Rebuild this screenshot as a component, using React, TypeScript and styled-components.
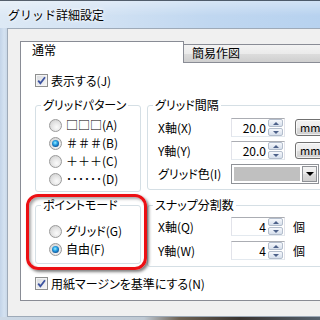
import React from 'react';
import styled, { createGlobalStyle, css } from 'styled-components';

const GlobalStyle = createGlobalStyle`
  html, body {
    margin: 0;
    padding: 0;
    background: #f0f0f0;
  }
  body {
    font-family: "Noto Sans CJK JP", "Noto Sans", sans-serif;
    font-size: 12px;
    color: #000;
  }
`;

const Window = styled.div`
  width: 320px;
  height: 320px;
  overflow: hidden;
  display: flex;
  flex-direction: column;
`;

const TitleBar = styled.div`
  flex: none;
  height: 28px;
  box-sizing: border-box;
  border-top: 1px solid rgba(40, 50, 62, 0.75);
  padding-left: 8px;
  display: flex;
  align-items: center;
  background:
    linear-gradient(180deg, rgba(255, 255, 255, 0.35) 0%, rgba(255, 255, 255, 0) 55%),
    linear-gradient(90deg, #dde9f5 0%, #d2e2f3 30%, #c0d7f0 65%, #b7d2ef 100%);
`;

const Title = styled.span`
  font-size: 12px;
  line-height: 14px;
  white-space: nowrap;
  text-shadow: 0 0 5px #fff, 0 0 3px #fff;
`;

const Frame = styled.div`
  flex: 1;
  display: flex;
  min-height: 0;
`;

const SideFrame = styled.div`
  flex: none;
  width: 7px;
  background: linear-gradient(90deg, #c3d4e8, #d4e2f1 60%, #c9d8e8);
`;

const Client = styled.div`
  flex: 1;
  min-width: 0;
  background: #f0f0f0;
  border-top: 1px solid #9eaab8;
  border-left: 1px solid #9eaab8;
  border-bottom: 1px solid #9eaab8;
  padding: 12px 0 0 12px;
`;

const BottomFrame = styled.div`
  flex: none;
  height: 3px;
  background: linear-gradient(90deg, #cdd9e6 0%, #bfc9d3 45%, #6e6254 56%, #3a3430 75%, #55616e 100%);
`;

const Tabs = styled.div`
  width: 420px;
`;

const TabStrip = styled.div`
  display: flex;
  align-items: flex-end;
  height: 21px;
`;

const Tab = styled.div<{ $active?: boolean }>`
  box-sizing: border-box;
  line-height: 14px;
  white-space: nowrap;
  border: 1px solid #898c95;
  ${(p) =>
    p.$active
      ? css`
          position: relative;
          z-index: 1;
          width: 164px;
          height: 22px;
          margin-bottom: -1px;
          padding: 1px 0 0 11px;
          border-bottom: none;
          background: #fff;
        `
      : css`
          flex: 1;
          height: 18px;
          padding: 1px 0 0 8px;
          border-left: none;
          border-bottom: none;
          background: linear-gradient(#f3f3f3 0%, #ebebeb 50%, #dddddd 51%, #cfcfcf 100%);
        `}
`;

const TabPage = styled.div`
  box-sizing: border-box;
  height: 239px;
  background: #fff;
  border: 1px solid #898c95;
  padding: 11px 0 0 14px;
`;

const CheckRow = styled.label<{ $gap?: number }>`
  display: flex;
  align-items: center;
  gap: 3px;
  height: 13px;
  line-height: 14px;
  margin-top: ${(p) => p.$gap ?? 0}px;
  white-space: nowrap;
  font-feature-settings: "palt" 1;
`;

const CheckBox = styled.span`
  flex: none;
  width: 13px;
  height: 13px;
  box-sizing: border-box;
  border: 1px solid #8e8f8f;
  background: linear-gradient(135deg, #d8dadd, #f7f7f8);
  box-shadow: inset 0 0 0 1px #f4f4f4;
  display: flex;
  align-items: center;
  justify-content: center;
`;

const GroupGrid = styled.div`
  display: grid;
  grid-template-columns: 106px 240px;
  column-gap: 6px;
  row-gap: 6px;
  align-items: start;
  margin-top: 11px;
`;

const Group = styled.fieldset`
  margin: 0;
  padding: 0;
  min-width: 0;
  border: 1px solid #d5dfe5;
  border-radius: 3px;
`;

const Legend = styled.legend`
  margin-left: 5px;
  padding: 0 2px;
  line-height: 14px;
  white-space: nowrap;
  font-feature-settings: "palt" 1;
`;

const GroupBody = styled.div<{ $pad: string }>`
  padding: ${(p) => p.$pad};
`;

const RadioRow = styled.div<{ $fullWidth?: boolean }>`
  display: flex;
  align-items: center;
  gap: 4px;
  height: 18px;
  line-height: 14px;
  white-space: nowrap;
  font-feature-settings: ${(p) => (p.$fullWidth ? 'normal' : '"palt" 1')};
`;

const Radio = styled.span<{ $checked?: boolean }>`
  flex: none;
  position: relative;
  width: 13px;
  height: 13px;
  box-sizing: border-box;
  border-radius: 50%;
  border: 1px solid #9a9a9a;
  background: radial-gradient(circle at 60% 65%, #fbfbfb 0%, #e6e6e6 45%, #c9c9c9 100%);
  ${(p) =>
    p.$checked &&
    css`
      &::after {
        content: '';
        position: absolute;
        left: 2px;
        top: 2px;
        width: 7px;
        height: 7px;
        border-radius: 50%;
        background: radial-gradient(circle at 45% 40%, #9ef0ff 0%, #2aa4e6 35%, #0b4f95 75%, #173c66 100%);
      }
    `}
`;

const Marked = styled.div`
  position: relative;
  &::after {
    content: '';
    position: absolute;
    inset: -4px -6px -6px -9px;
    border: 3px solid #ec1014;
    border-radius: 12px;
    box-shadow: 2px 2px 3px rgba(0, 0, 0, 0.5), inset 2px 2px 3px rgba(0, 0, 0, 0.35);
    pointer-events: none;
  }
`;

const FieldRow = styled.div<{ $gap?: number }>`
  display: flex;
  align-items: center;
  margin-top: ${(p) => p.$gap ?? 0}px;
  line-height: 14px;
  white-space: nowrap;
  font-feature-settings: "palt" 1;
`;

const FieldLabel = styled.span`
  flex: none;
  width: 73px;
`;

const SpinBox = styled.div`
  flex: none;
  display: flex;
  align-items: center;
  width: 54px;
  height: 19px;
  box-sizing: border-box;
  border: 1px solid #e2e3ea;
  border-top-color: #abadb3;
  border-bottom-color: #e3e9ef;
  background: #fff;
`;

const SpinValue = styled.span`
  flex: 1;
  text-align: right;
  padding-right: 2px;
`;

const SpinButtons = styled.div`
  display: flex;
  flex-direction: column;
  gap: 1px;
  width: 15px;
  margin-right: 1px;
`;

const SpinButton = styled.span<{ $down?: boolean }>`
  height: 8px;
  box-sizing: border-box;
  border: 1px solid #b3bdcc;
  border-radius: 2px;
  background: linear-gradient(#f6f8fc, #d6dfec);
  display: flex;
  align-items: center;
  justify-content: center;
  &::after {
    content: '';
    border-left: 3px solid transparent;
    border-right: 3px solid transparent;
    ${(p) => (p.$down ? 'border-top: 3px solid #4d6189;' : 'border-bottom: 3px solid #4d6189;')}
  }
`;

const UnitButton = styled.span`
  margin-left: 10px;
  height: 17px;
  box-sizing: border-box;
  padding: 0 5px 0 4px;
  border: 1px solid #707070;
  border-radius: 3px;
  background: linear-gradient(#f2f2f2 0%, #ebebeb 50%, #dddddd 51%, #cfcfcf 100%);
  line-height: 15px;
  font-size: 11px;
  box-shadow: inset 0 0 0 1px rgba(255, 255, 255, 0.7);
`;

const Unit = styled.span`
  margin-left: 8px;
`;

const Combo = styled.div`
  flex: none;
  display: flex;
  width: 88px;
  height: 20px;
  box-sizing: border-box;
  border: 1px solid #8f9297;
  background: #fff;
  padding: 1px;
  gap: 1px;
`;

const Swatch = styled.span`
  flex: 1;
  background: #c0c0c0;
  border: 1px solid #fff;
`;

const ComboButton = styled.span`
  flex: none;
  width: 15px;
  box-sizing: border-box;
  border: 1px solid #8f9297;
  background: linear-gradient(#f4f4f4 0%, #e9e9e9 50%, #dcdcdc 51%, #cfcfcf 100%);
  display: flex;
  align-items: center;
  justify-content: center;
  &::after {
    content: '';
    border-left: 4px solid transparent;
    border-right: 4px solid transparent;
    border-top: 4px solid #000;
  }
`;

const Check = () => (
  <CheckBox>
    <svg width="9" height="9" viewBox="0 0 9 9">
      <path d="M1.2 4.6 L3.4 7.2 L8 1.3" fill="none" stroke="#3c53a0" strokeWidth="1.8" />
    </svg>
  </CheckBox>
);

const Spin = ({ value }: { value: string }) => (
  <SpinBox>
    <SpinValue>{value}</SpinValue>
    <SpinButtons>
      <SpinButton />
      <SpinButton $down />
    </SpinButtons>
  </SpinBox>
);

const patterns = [
  { label: '□□□(A)', checked: false },
  { label: '＃＃＃(B)', checked: true },
  { label: '＋＋＋(C)', checked: false },
  { label: '･･････(D)', checked: false },
];

export default function App() {
  return (
    <>
      <GlobalStyle />
      <Window>
        <TitleBar>
          <Title>グリッド詳細設定</Title>
        </TitleBar>
        <Frame>
          <SideFrame />
          <Client>
            <Tabs>
              <TabStrip>
                <Tab $active>通常</Tab>
                <Tab>簡易作図</Tab>
              </TabStrip>
              <TabPage>
                <CheckRow>
                  <Check />
                  表示する(J)
                </CheckRow>

                <GroupGrid>
                  <Group>
                    <Legend>グリッドパターン</Legend>
                    <GroupBody $pad="4px 0 3px 13px">
                      {patterns.map((p) => (
                        <RadioRow key={p.label} $fullWidth>
                          <Radio $checked={p.checked} />
                          {p.label}
                        </RadioRow>
                      ))}
                    </GroupBody>
                  </Group>

                  <Group>
                    <Legend>グリッド間隔</Legend>
                    <GroupBody $pad="6px 0 5px 10px">
                      <FieldRow>
                        <FieldLabel>X軸(X)</FieldLabel>
                        <Spin value="20.0" />
                        <UnitButton>mm</UnitButton>
                      </FieldRow>
                      <FieldRow $gap={4}>
                        <FieldLabel>Y軸(Y)</FieldLabel>
                        <Spin value="20.0" />
                        <UnitButton>mm</UnitButton>
                      </FieldRow>
                      <FieldRow $gap={4}>
                        <FieldLabel>グリッド色(I)</FieldLabel>
                        <Combo>
                          <Swatch />
                          <ComboButton />
                        </Combo>
                      </FieldRow>
                    </GroupBody>
                  </Group>

                  <Marked>
                    <Group>
                      <Legend>ポイントモード</Legend>
                      <GroupBody $pad="10px 0 5px 13px">
                        <RadioRow>
                          <Radio />
                          グリッド(G)
                        </RadioRow>
                        <RadioRow>
                          <Radio $checked />
                          自由(F)
                        </RadioRow>
                      </GroupBody>
                    </Group>
                  </Marked>

                  <Group>
                    <Legend>スナップ分割数</Legend>
                    <GroupBody $pad="5px 0 6px 10px">
                      <FieldRow>
                        <FieldLabel>X軸(Q)</FieldLabel>
                        <Spin value="4" />
                        <Unit>個</Unit>
                      </FieldRow>
                      <FieldRow $gap={5}>
                        <FieldLabel>Y軸(W)</FieldLabel>
                        <Spin value="4" />
                        <Unit>個</Unit>
                      </FieldRow>
                    </GroupBody>
                  </Group>
                </GroupGrid>

                <CheckRow $gap={10}>
                  <Check />
                  用紙マージンを基準にする(N)
                </CheckRow>
              </TabPage>
            </Tabs>
          </Client>
        </Frame>
        <BottomFrame />
      </Window>
    </>
  );
}
